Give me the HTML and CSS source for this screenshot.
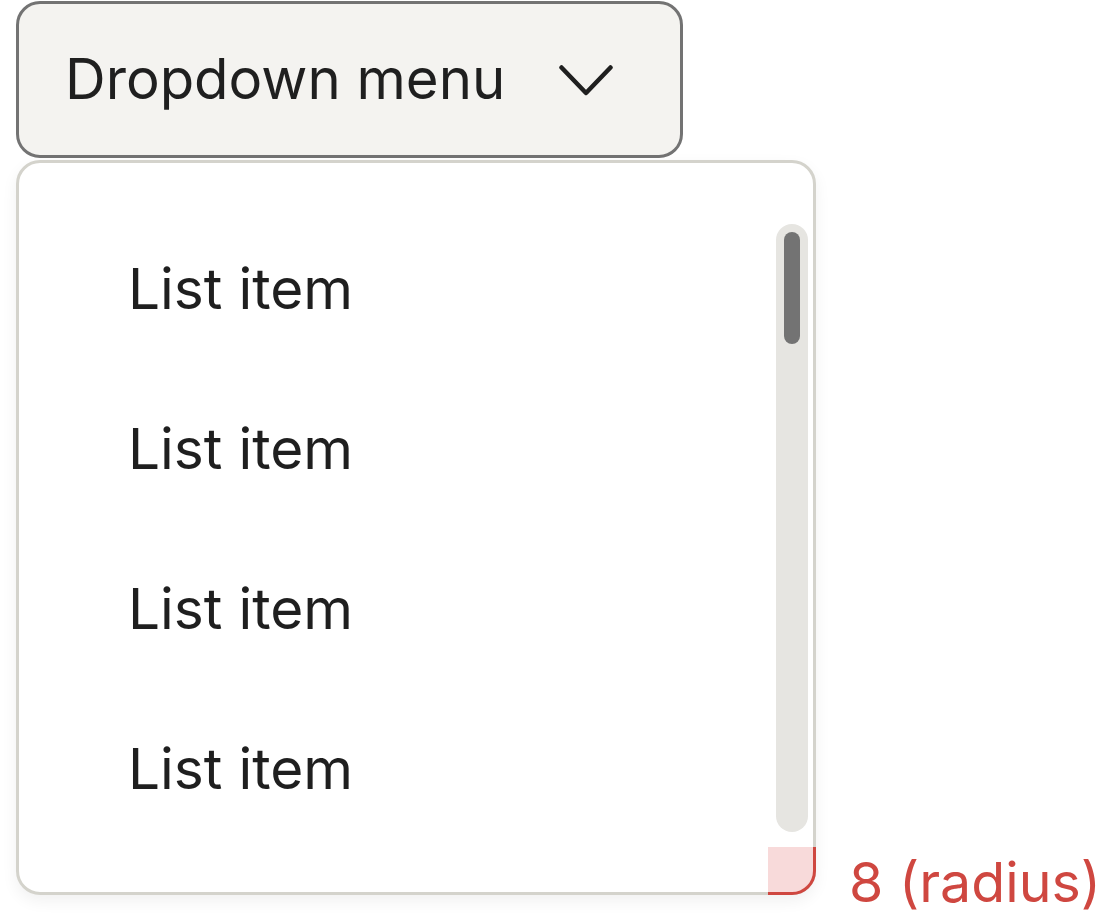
FILE: index.html
```html
<!DOCTYPE html>
<html>
<head>
<meta charset="utf-8">
<link rel="stylesheet" href="styles.css">
</head>
<body>
<div class="stage">
  <button class="trigger">
    <span class="trigger-label">Dropdown menu</span>
    <svg class="chevron" width="56" height="32" viewBox="0 0 56 32"><polyline points="3.5,3.5 28,29 52.5,3.5" fill="none" stroke="#1f1f1f" stroke-width="4.5" stroke-linecap="round" stroke-linejoin="round"/></svg>
  </button>
  <div class="menu">
    <ul class="list">
      <li class="item">List item</li>
      <li class="item">List item</li>
      <li class="item">List item</li>
      <li class="item">List item</li>
    </ul>
    <div class="track"><div class="thumb"></div></div>
    <div class="radius-mark"></div>
    <div class="radius-label">8 (radius)</div>
  </div>
</div>
</body>
</html>
```

FILE: styles.css
```css
html, body {
  margin: 0;
  padding: 0;
  background: #ffffff;
  min-height: 920px;
}
body {
  font-family: Inter, "Noto Sans", sans-serif;
  color: #1f1f1f;
}
.stage {
  padding: 1px 0 30px 16px;
  display: flex;
  flex-direction: column;
  gap: 2px;
}
.trigger {
  box-sizing: border-box;
  width: 667px;
  height: 157px;
  border: 3px solid #737373;
  border-radius: 24px;
  background: #f4f3f0;
  display: flex;
  align-items: center;
  padding: 0 0 0 46px;
  font-family: Inter, "Noto Sans", sans-serif;
  color: #1f1f1f;
  margin: 0;
}
.trigger-label {
  font-size: 56.3px;
  line-height: 1;
  letter-spacing: 0;
}
.chevron {
  margin-left: auto;
  margin-right: 66px;
  display: block;
}
.menu {
  position: relative;
  box-sizing: border-box;
  width: 800px;
  height: 735px;
  border: 3px solid #d4d3cc;
  border-radius: 24px;
  background: #ffffff;
  box-shadow: 0 6px 16px rgba(0, 0, 0, 0.06);
}
.list {
  list-style: none;
  margin: 0;
  padding: 46px 0 0 0;
}
.item {
  height: 160px;
  display: flex;
  align-items: center;
  padding-left: 109px;
  font-size: 56.8px;
  line-height: 1;
}
.track {
  position: absolute;
  top: 61px;
  right: 5px;
  width: 32px;
  height: 608px;
  border-radius: 16px;
  background: #e6e5e1;
}
.thumb {
  margin: 8px auto 0;
  width: 16px;
  height: 112px;
  border-radius: 8px;
  background: #737373;
}
.radius-mark {
  position: absolute;
  right: -3px;
  bottom: -3px;
  box-sizing: border-box;
  width: 48px;
  height: 48px;
  background: #f8dada;
  border-right: 3px solid #cf4740;
  border-bottom: 3px solid #cf4740;
  border-bottom-right-radius: 24px;
}
.radius-label {
  position: absolute;
  left: calc(100% + 36px);
  bottom: -17px;
  white-space: nowrap;
  color: #cf4740;
  font-size: 55.5px;
  line-height: 1;
}
```
